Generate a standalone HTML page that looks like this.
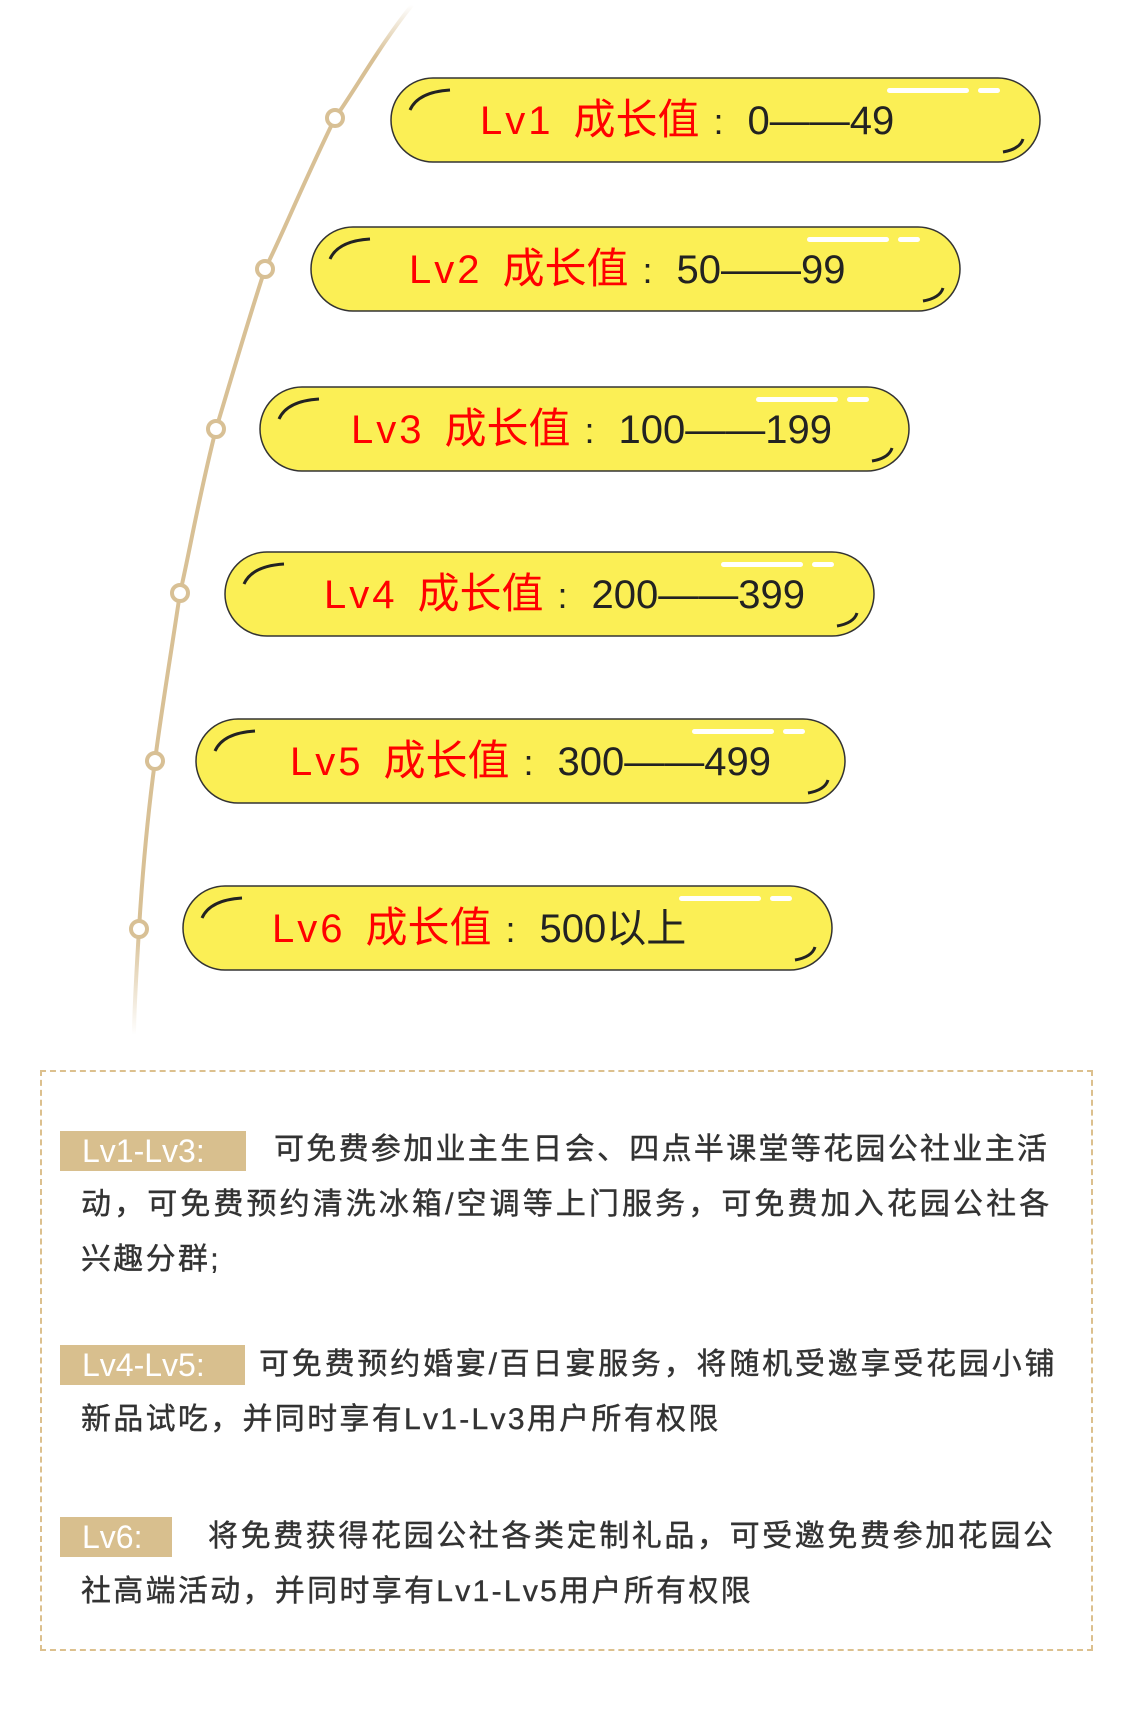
<!DOCTYPE html>
<html><head><meta charset="utf-8"><style>
body{margin:0;width:1125px;height:1716px;background:#fff;position:relative;overflow:hidden;font-family:"Liberation Sans","Noto Sans CJK SC",sans-serif}
.pill{position:absolute;width:651px;height:86px;}
.pill svg{position:absolute;left:0;top:0}
.pt{position:absolute;top:0;height:86px;line-height:86px;white-space:nowrap;font-size:40px;color:#222}
.r{color:#f00}
.lv{letter-spacing:3px}
.cz{font-size:42px;margin-left:20px}
.co{margin-left:14px;margin-right:24px;font-size:36px}
.box{position:absolute;left:40px;top:1070px;width:1049px;height:577px;border:2px dashed #dcc08e}
.lab{position:absolute;left:60px;height:40px;line-height:40px;background:#d8bf8e;color:#fff;font-size:32px;padding-left:22px;box-sizing:border-box}
.ln{position:absolute;font-size:30px;color:#333;white-space:nowrap;letter-spacing:2.3px;line-height:40px;-webkit-text-stroke:0.4px #333}
</style></head><body>
<svg width="1125" height="1060" style="position:absolute;left:0;top:0">
<defs><linearGradient id="g" x1="0" y1="0" x2="0" y2="1"><stop offset="0" stop-color="#d8c095" stop-opacity="0"/><stop offset="0.05" stop-color="#d8c095"/><stop offset="0.9" stop-color="#d8c095"/><stop offset="1" stop-color="#d8c095" stop-opacity="0"/></linearGradient></defs>
<path d="M412 5 C380 45 355 90 335 118 C300 190 280 240 265 269 C245 330 228 390 216 429 C198 500 188 560 180 593 C170 660 160 720 155 761 C147 820 142 880 139 929 C136 980 134 1010 134 1035" fill="none" stroke="url(#g)" stroke-width="4"/>
<g fill="#fff" stroke="#d8c095" stroke-width="4">
<circle cx="335" cy="118" r="8"/><circle cx="265" cy="269" r="8"/><circle cx="216" cy="429" r="8"/><circle cx="180" cy="593" r="8"/><circle cx="155" cy="761" r="8"/><circle cx="139" cy="929" r="8"/></g>
</svg>

<div class="pill" style="left:390px;top:77px">
<svg width="651" height="86"><rect x="1" y="1" width="649" height="84" rx="42" fill="#fbef55" stroke="#333" stroke-width="1.5"/><path d="M20 33 Q28 15 60 13" fill="none" stroke="#222" stroke-width="3"/><path d="M613 75 Q630 72 633 62" fill="none" stroke="#222" stroke-width="3"/><rect x="497" y="11" width="82" height="5" rx="2.5" fill="#fff"/><rect x="588" y="11" width="22" height="5" rx="2.5" fill="#fff"/></svg>
<div class="pt" style="left:90px"><span class="r lv">Lv1</span><span class="r cz">成长值</span><span class="co">:</span>0——49</div></div>

<div class="pill" style="left:310px;top:226px">
<svg width="651" height="86"><rect x="1" y="1" width="649" height="84" rx="42" fill="#fbef55" stroke="#333" stroke-width="1.5"/><path d="M20 33 Q28 15 60 13" fill="none" stroke="#222" stroke-width="3"/><path d="M613 75 Q630 72 633 62" fill="none" stroke="#222" stroke-width="3"/><rect x="497" y="11" width="82" height="5" rx="2.5" fill="#fff"/><rect x="588" y="11" width="22" height="5" rx="2.5" fill="#fff"/></svg>
<div class="pt" style="left:99px"><span class="r lv">Lv2</span><span class="r cz">成长值</span><span class="co">:</span>50——99</div></div>

<div class="pill" style="left:259px;top:386px">
<svg width="651" height="86"><rect x="1" y="1" width="649" height="84" rx="42" fill="#fbef55" stroke="#333" stroke-width="1.5"/><path d="M20 33 Q28 15 60 13" fill="none" stroke="#222" stroke-width="3"/><path d="M613 75 Q630 72 633 62" fill="none" stroke="#222" stroke-width="3"/><rect x="497" y="11" width="82" height="5" rx="2.5" fill="#fff"/><rect x="588" y="11" width="22" height="5" rx="2.5" fill="#fff"/></svg>
<div class="pt" style="left:92px"><span class="r lv">Lv3</span><span class="r cz">成长值</span><span class="co">:</span>100——199</div></div>

<div class="pill" style="left:224px;top:551px">
<svg width="651" height="86"><rect x="1" y="1" width="649" height="84" rx="42" fill="#fbef55" stroke="#333" stroke-width="1.5"/><path d="M20 33 Q28 15 60 13" fill="none" stroke="#222" stroke-width="3"/><path d="M613 75 Q630 72 633 62" fill="none" stroke="#222" stroke-width="3"/><rect x="497" y="11" width="82" height="5" rx="2.5" fill="#fff"/><rect x="588" y="11" width="22" height="5" rx="2.5" fill="#fff"/></svg>
<div class="pt" style="left:100px"><span class="r lv">Lv4</span><span class="r cz">成长值</span><span class="co">:</span>200——399</div></div>

<div class="pill" style="left:195px;top:718px">
<svg width="651" height="86"><rect x="1" y="1" width="649" height="84" rx="42" fill="#fbef55" stroke="#333" stroke-width="1.5"/><path d="M20 33 Q28 15 60 13" fill="none" stroke="#222" stroke-width="3"/><path d="M613 75 Q630 72 633 62" fill="none" stroke="#222" stroke-width="3"/><rect x="497" y="11" width="82" height="5" rx="2.5" fill="#fff"/><rect x="588" y="11" width="22" height="5" rx="2.5" fill="#fff"/></svg>
<div class="pt" style="left:95px"><span class="r lv">Lv5</span><span class="r cz">成长值</span><span class="co">:</span>300——499</div></div>

<div class="pill" style="left:182px;top:885px">
<svg width="651" height="86"><rect x="1" y="1" width="649" height="84" rx="42" fill="#fbef55" stroke="#333" stroke-width="1.5"/><path d="M20 33 Q28 15 60 13" fill="none" stroke="#222" stroke-width="3"/><path d="M613 75 Q630 72 633 62" fill="none" stroke="#222" stroke-width="3"/><rect x="497" y="11" width="82" height="5" rx="2.5" fill="#fff"/><rect x="588" y="11" width="22" height="5" rx="2.5" fill="#fff"/></svg>
<div class="pt" style="left:90px"><span class="r lv">Lv6</span><span class="r cz">成长值</span><span class="co">:</span>500以上</div></div>

<div class="box"></div>
<div class="lab" style="top:1131px;width:186px">Lv1-Lv3:</div>
<div class="ln" style="left:274px;top:1130px">可免费参加业主生日会、四点半课堂等花园公社业主活</div>
<div class="ln" style="left:81px;top:1185px;letter-spacing:3.1px">动，可免费预约清洗冰箱/空调等上门服务，可免费加入花园公社各</div>
<div class="ln" style="left:81px;top:1240px">兴趣分群;</div>

<div class="lab" style="top:1345px;width:185px">Lv4-Lv5:</div>
<div class="ln" style="left:259px;top:1345px;letter-spacing:2.8px">可免费预约婚宴/百日宴服务，将随机受邀享受花园小铺</div>
<div class="ln" style="left:81px;top:1400px">新品试吃，并同时享有Lv1-Lv3用户所有权限</div>

<div class="lab" style="top:1517px;width:112px">Lv6:</div>
<div class="ln" style="left:208px;top:1517px;letter-spacing:2.6px">将免费获得花园公社各类定制礼品，可受邀免费参加花园公</div>
<div class="ln" style="left:81px;top:1572px">社高端活动，并同时享有Lv1-Lv5用户所有权限</div>
</body></html>
